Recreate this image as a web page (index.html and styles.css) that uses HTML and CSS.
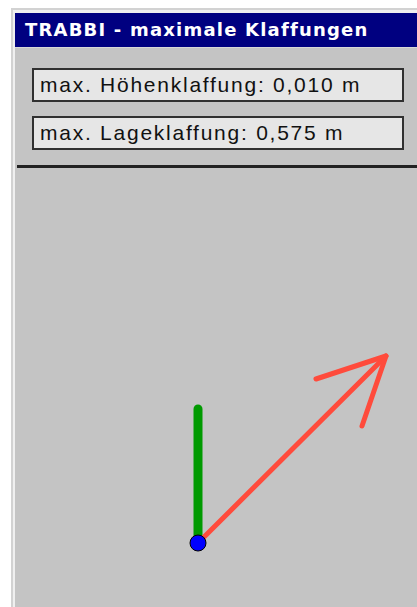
FILE: index.html
```html
<!DOCTYPE html>
<html lang="de">
<head>
<meta charset="utf-8">
<title>TRABBI - maximale Klaffungen</title>
<link rel="stylesheet" href="styles.css">
</head>
<body>
  <div class="window">
    <div class="frame">
      <div class="titlebar">TRABBI - maximale Klaffungen</div>
      <div class="panel">
        <div class="fields">
          <div class="field">max. Höhenklaffung: 0,010 m</div>
          <div class="field">max. Lageklaffung: 0,575 m</div>
        </div>
        <div class="canvas">
          <svg class="plot" viewBox="17 168 400 439" width="400" height="439" xmlns="http://www.w3.org/2000/svg">
            <!-- height gap (green) -->
            <line x1="198" y1="409" x2="198" y2="543" stroke="#009a00" stroke-width="9" stroke-linecap="round"/>
            <!-- position gap vector (red) -->
            <g stroke="#ff4b3c" stroke-width="5" stroke-linecap="round" stroke-linejoin="round" fill="none">
              <line x1="198" y1="543" x2="386" y2="356"/>
              <polyline points="316,379 386,356 362,426"/>
            </g>
            <!-- station point -->
            <circle cx="198" cy="543" r="8" fill="#0000ff" stroke="#000" stroke-width="1"/>
          </svg>
        </div>
      </div>
    </div>
  </div>
</body>
</html>
```

FILE: styles.css
```css
html, body {
  margin: 0;
  padding: 0;
  background: #ffffff;
  height: 100%;
  overflow: hidden;
}

body {
  padding: 8px 0 0 11px;
  box-sizing: border-box;
}

.window {
  border-top: 2px solid #d2d2d2;
  border-left: 2px solid #d2d2d2;
  height: 100%;
  box-sizing: border-box;
}

.frame {
  border-top: 3px solid #efefef;
  border-left: 2px solid #efefef;
  height: 100%;
  box-sizing: border-box;
  display: flex;
  flex-direction: column;
  background: #c4c4c4;
}

.titlebar {
  height: 34px;
  background: #000080;
  color: #ffffff;
  font-family: "DejaVu Sans", "Liberation Sans", sans-serif;
  font-weight: bold;
  font-size: 18px;
  letter-spacing: 1.2px;
  line-height: 33px;
  padding-left: 10px;
  white-space: nowrap;
  border-bottom: 1px solid #d8d8d8;
}

.panel {
  flex: 1;
  display: flex;
  flex-direction: column;
  background: #c4c4c4;
}

.fields {
  display: flex;
  flex-direction: column;
  gap: 14px;
  padding: 20px 13px 15px 17px;
}

.field {
  height: 34px;
  box-sizing: border-box;
  border: 2px solid #303030;
  background: #e6e6e6;
  color: #111111;
  font-family: "Liberation Sans", Arial, sans-serif;
  font-size: 21px;
  letter-spacing: 1.75px;
  line-height: 30px;
  padding-left: 6px;
  white-space: nowrap;
  overflow: hidden;
}

.canvas {
  flex: 1;
  margin-left: 2px;
  border-top: 3px solid #222222;
  overflow: hidden;
}

.plot {
  display: block;
}
```
